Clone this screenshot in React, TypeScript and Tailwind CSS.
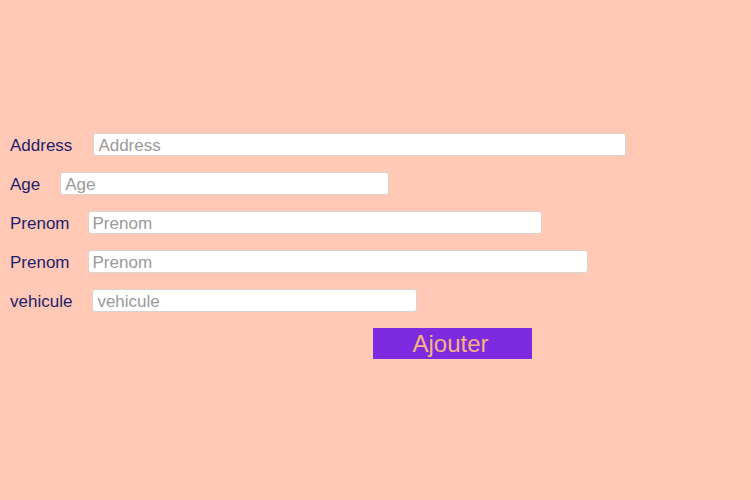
const fields = [
  { label: 'Address', width: 'w-[533px]', gap: 'gap-[21px]' },
  { label: 'Age', width: 'w-[329px]', gap: 'gap-[20px]' },
  { label: 'Prenom', width: 'w-[454px]', gap: 'gap-[18px]' },
  { label: 'Prenom', width: 'w-[500px]', gap: 'gap-[18px]' },
  { label: 'vehicule', width: 'w-[325px]', gap: 'gap-[20px]' },
]

export default function App() {
  return (
    <div className="w-[751px] h-[500px] bg-[#ffc9b6] font-['Liberation_Sans',Arial,sans-serif] pt-[133px]">
      <form className="flex flex-col gap-4" onSubmit={(e) => e.preventDefault()}>
        {fields.map(({ label, width, gap }, i) => (
          <div key={i} className={`flex items-center h-[23px] pl-[10px] ${gap}`}>
            <label className="h-[23px] text-[17px] leading-[25px] text-[#1e1e6c]">{label}</label>
            <input
              placeholder={label}
              className={`${width} h-[23px] bg-white border border-[#d9d2ce] rounded-[3px] px-1 pt-[3px] pb-0 text-[17px] leading-[18px] text-[#333] placeholder:text-[#9a9a9a] outline-none`}
            />
          </div>
        ))}
        <div className="pl-[373px]">
          <button
            type="submit"
            className="w-[159px] h-[31px] bg-[#7d2ae0] text-[#f5b47e] text-[24px] leading-[31px] pr-1"
          >
            Ajouter
          </button>
        </div>
      </form>
    </div>
  )
}
